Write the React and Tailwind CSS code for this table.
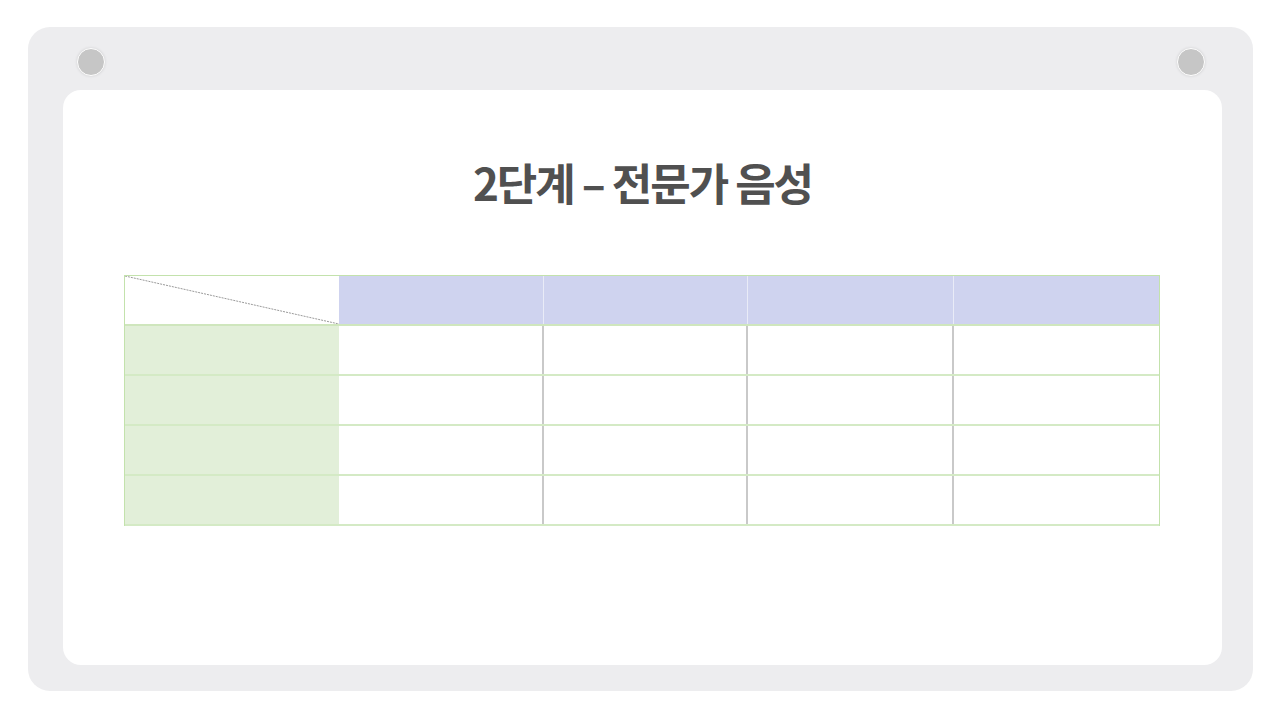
const COLS = ['w-[214px]', 'w-[205px]', 'w-[204px]', 'w-[206px]', 'w-[205px]'];

function Pin() {
  return <div className="h-[28px] w-[28px] rounded-full bg-[#c6c6c6] border-[1.5px] border-white shadow-[0_0_3px_rgba(0,0,0,0.12)]" />;
}

function Diagonal() {
  return (
    <svg className="absolute inset-0" width="100%" height="100%" preserveAspectRatio="none" viewBox="0 0 100 100">
      <line x1="0" y1="0" x2="100" y2="100" stroke="#9a9a9a" strokeWidth="1" strokeDasharray="2 1" vectorEffect="non-scaling-stroke" />
    </svg>
  );
}

function HeaderRow() {
  return (
    <div className="flex h-[50px] border-b-2 border-[#cfe6bd]">
      <div className="w-[214px] relative bg-white">
        <Diagonal />
      </div>
      {COLS.slice(1).map((w, i) => (
        <div key={i} className={w + ' bg-[#cfd3ef] border-r border-[#e9ebf7] last:border-r-0'} />
      ))}
    </div>
  );
}

function BodyRow() {
  return (
    <div className="flex h-[50px] border-b-2 border-[#d4eac5]">
      <div className="w-[214px] bg-[#e2efd9]" />
      {COLS.slice(1).map((w, i) => (
        <div key={i} className={w + ' bg-white border-r-2 border-[#c9c9c9] last:border-r-0'} />
      ))}
    </div>
  );
}

export default function App() {
  return (
    <div className="w-[1280px] h-[720px] bg-white pt-[27px] pl-[28px] font-['Noto_Sans_CJK_KR','Noto_Sans',sans-serif]">
      <div className="w-[1225px] h-[664px] bg-[#ededef] rounded-[22px] flex flex-col">
        <div className="h-[63px] flex justify-between pt-[21px] pl-[49px] pr-[48px]">
          <Pin />
          <Pin />
        </div>
        <div className="ml-[35px] mr-[31px] h-[575px] bg-white rounded-[18px] flex flex-col items-center">
          <h1 className="mt-[66px] h-[52px] leading-[52px] text-[44px] font-bold tracking-[-2px] text-[#505050]">
            2단계 – 전문가 음성
          </h1>
          <div className="mt-[67px] self-start ml-[61px] w-[1036px] border-x border-t border-[#c3e2ac]">
            <HeaderRow />
            <BodyRow />
            <BodyRow />
            <BodyRow />
            <BodyRow />
          </div>
        </div>
      </div>
    </div>
  );
}
